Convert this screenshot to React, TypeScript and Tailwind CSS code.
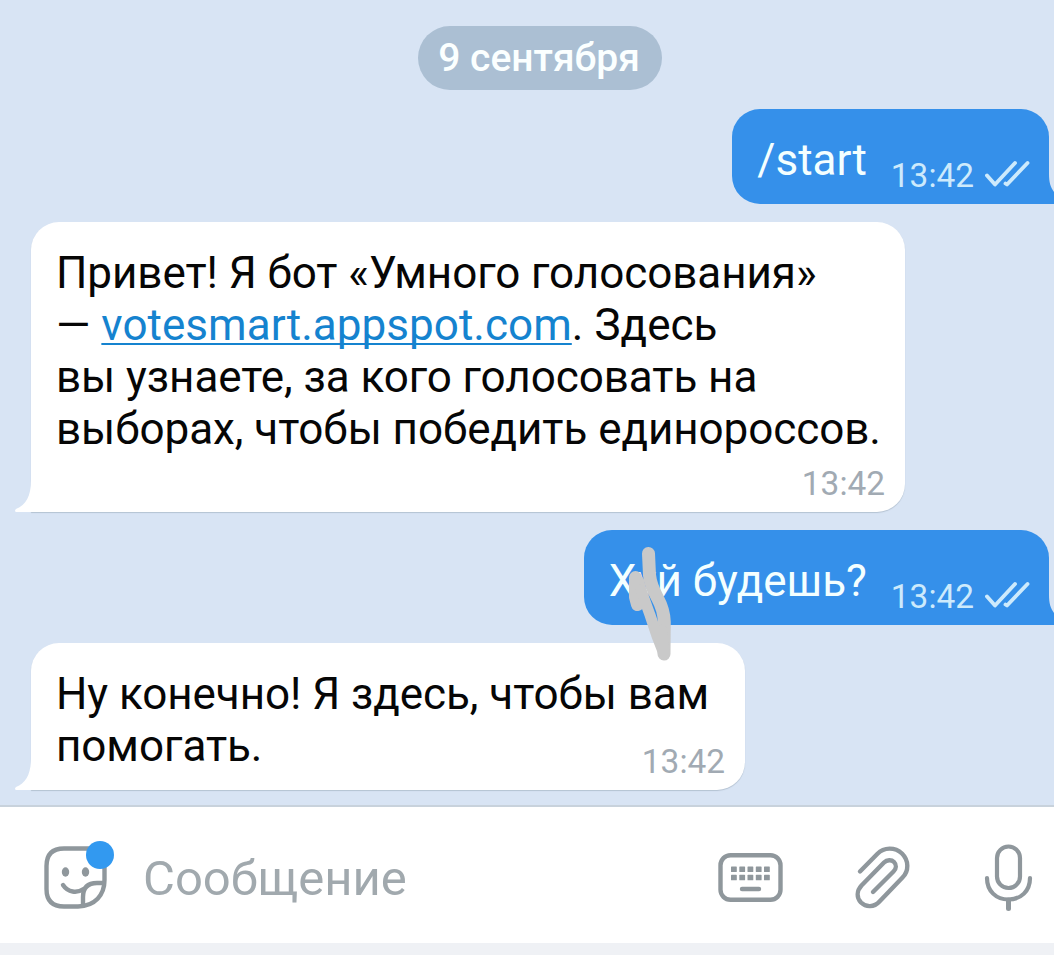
import type { ReactNode } from 'react'

function Checks() {
  return (
    <svg width="46" height="28" viewBox="0 0 46 28" fill="none" stroke="#cdeafc" strokeWidth="3.8" strokeLinecap="round" strokeLinejoin="round">
      <path d="M2 15.5 L10 24.5 L30 3" />
      <path d="M20.5 23.5 L22 24.5 L42.5 3" />
    </svg>
  )
}

function Outgoing({ children, time }: { children: ReactNode; time: string }) {
  return (
    <div className="relative mr-[5px] flex h-[95px] self-end rounded-[28px] rounded-br-none bg-[#3590ea] pl-[25px] pr-[18px]">
      <div className="mt-[25px] mr-[24px] whitespace-nowrap text-[44px] leading-[52px] text-[#f4ffff]">{children}</div>
      <div className="mt-[47px] mr-[11px] text-[33.4px] leading-[40px] text-[#cdeafc]">{time}</div>
      <div className="mt-[51px]"><Checks /></div>
      {/* tail, runs off the right edge */}
      <svg className="absolute bottom-0 -right-[5px]" width="6" height="30" viewBox="0 0 6 30">
        <path d="M0 0 H1 C1 8 2.5 13 6 18 V30 H0 Z" fill="#3590ea" />
      </svg>
    </div>
  )
}

function Incoming({ children, time, className }: { children: ReactNode; time: string; className: string }) {
  return (
    <div className={`relative ml-[31px] rounded-[28px] rounded-bl-none bg-white pl-[25px] shadow-[0_1px_1px_#b4c2d2] ${className}`}>
      {children}
      <div className="absolute right-[20px] bottom-[8px] text-[33.4px] leading-[40px] tracking-normal text-[#a1aab3]">{time}</div>
      <svg className="absolute bottom-0 -left-[16px]" width="17" height="32" viewBox="0 0 17 32">
        <path d="M17 0 H16 C16 16 11 25 1 29 Q-1 31 1 32 H17 Z" fill="#fff" />
      </svg>
    </div>
  )
}

function Line({ children, className = '' }: { children: ReactNode; className?: string }) {
  return <div className={`whitespace-nowrap ${className}`}>{children}</div>
}

function Scribble() {
  return (
    <svg className="absolute left-[620px] top-[540px]" width="60" height="130" viewBox="620 540 60 130" fill="none" stroke="#c9c9c9" strokeLinecap="round" strokeLinejoin="round">
      <path d="M648.5 553.5 L649.5 575 Q650.5 585 657.5 598 Q664 610 664.3 622 L664 654" strokeWidth="13" />
      <path d="M635.5 577.5 L635.5 597 L637.5 604.5 L641 600 L638 582" strokeWidth="13" />
      <path d="M641 590 L650 615 L657 636 L664 654 L662 630" strokeWidth="11" />
    </svg>
  )
}

function StickerIcon() {
  return (
    <svg width="74" height="72" viewBox="42 839 74 72" fill="none" stroke="#8f979c" strokeWidth="4.4" strokeLinecap="round" strokeLinejoin="round">
      <path d="M90 848.5 H64 Q46.5 848.5 46.5 866 V889 Q46.5 906.5 64 906.5 H78 C95 906 104.5 895 104.5 880 V862" />
      <path d="M63 885 C68 892.5 77 893.5 83.5 889" />
      <path d="M83 905 V897 Q83 883 97 883 H104" />
      <ellipse cx="65.5" cy="872" rx="3.7" ry="4.7" fill="#8f979c" stroke="none" />
      <ellipse cx="85.5" cy="872" rx="3.7" ry="4.7" fill="#8f979c" stroke="none" />
      <circle cx="100" cy="855" r="14" fill="#3299f0" stroke="none" />
    </svg>
  )
}

function KeyboardIcon() {
  return (
    <svg width="66" height="52" viewBox="717 852 66 52" fill="none" stroke="#8f979c" strokeWidth="4.4">
      <rect x="720.5" y="855.2" width="60" height="44.6" rx="10" />
      {[731, 739.3, 747.5, 755.8, 764].map((x) => (
        <g key={x} fill="#8f979c" stroke="none">
          <rect x={x} y="866.5" width="5.8" height="5.5" rx="0.6" />
          <rect x={x} y="874.8" width="5.8" height="5.5" rx="0.6" />
        </g>
      ))}
      <path d="M742 889 H759" strokeLinecap="round" />
    </svg>
  )
}

function ClipIcon() {
  return (
    <svg width="60" height="68" viewBox="852 843 60 68" fill="none" stroke="#8f979c" strokeWidth="4.4" strokeLinecap="round" strokeLinejoin="round">
      <path d="M860 871.5 L877.5 853.8 C884 847 895 847 902 853.5 C909 860.5 909 871 902.5 877.5 L879.5 901.5 C874 907.5 866 907.5 861 902.5 C856.5 897.5 856.5 891 861.5 885.5 L884 862.5 C887 859.5 891.5 859.5 894 862 C896.5 864.5 896.5 868.5 893.5 871.5 L873 892" />
    </svg>
  )
}

function MicIcon() {
  return (
    <svg width="52" height="70" viewBox="983 842 52 70" fill="none" stroke="#8f979c" strokeWidth="4.2" strokeLinecap="round">
      <rect x="997" y="846.5" width="23" height="41.5" rx="11.5" />
      <path d="M987 878 C987 891 996 899.5 1008.5 899.5 C1021 899.5 1030 891 1030 878" />
      <path d="M1008.5 900 V908.5" strokeWidth="5" />
    </svg>
  )
}

export default function App() {
  return (
    <div className="relative flex h-[955px] w-[1054px] flex-col overflow-hidden bg-[#eff1f5] font-['Roboto',sans-serif]">
      <main className="flex h-[807px] flex-col items-start border-b-2 border-[#c8d2dc] bg-[#d8e4f4] pt-[26px]">
        <div className="ml-[418px] flex h-[64px] w-[244px] items-center justify-center rounded-full bg-[#abbfd3] pr-[2px] text-[39px] font-medium text-[#fbffff]">
          <span>9 сентября</span>
        </div>
        <div className="mt-[19px] flex flex-col self-stretch">
          <Outgoing time="13:42">/start</Outgoing>
        </div>
        <Incoming time="13:42" className="mt-[18px] h-[290px] w-[874px] pt-[25px] text-[44px] leading-[52px] tracking-[-0.06px] text-[#060606]">
          <Line>Привет! Я бот «Умного голосования»</Line>
          <Line className="tracking-[0.04px]">
            — <a className="text-[#1583cf] underline decoration-[2px] underline-offset-[3px] [text-decoration-skip-ink:none]">votesmart.appspot.com</a>. Здесь
          </Line>
          <Line>вы узнаете, за кого голосовать на</Line>
          <Line>выборах, чтобы победить единороссов.</Line>
        </Incoming>
        <div className="mt-[18px] flex flex-col self-stretch">
          <Outgoing time="13:42">Хуй будешь?</Outgoing>
        </div>
        <Incoming time="13:42" className="mt-[18px] h-[147px] w-[714px] pt-[25px] text-[44px] leading-[52px] tracking-[-0.06px] text-[#060606]">
          <Line>Ну конечно! Я здесь, чтобы вам</Line>
          <Line>помогать.</Line>
        </Incoming>
      </main>
      <footer className="flex h-[136px] bg-white pl-[42px]">
        <div className="mt-[32px]"><StickerIcon /></div>
        <div className="mt-[42px] ml-[27px] w-[574px] text-[49px] leading-[60px] text-[#a1a9ae]">Сообщение</div>
        <div className="mt-[45px]"><KeyboardIcon /></div>
        <div className="mt-[36px] ml-[69px]"><ClipIcon /></div>
        <div className="mt-[35px] ml-[71px]"><MicIcon /></div>
      </footer>
      <Scribble />
    </div>
  )
}
